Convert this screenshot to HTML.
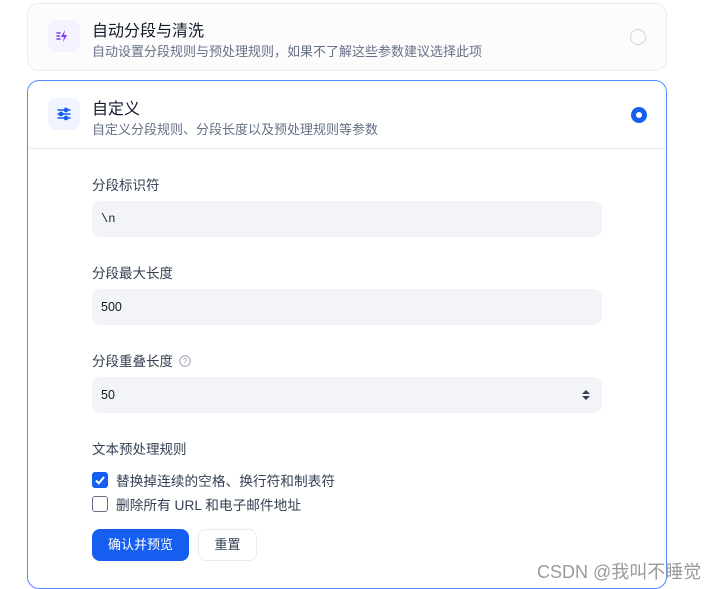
<!DOCTYPE html>
<html><head><meta charset="utf-8"><style>
*{box-sizing:border-box;margin:0;padding:0}
body{width:724px;height:589px;background:#fff;position:relative;overflow:hidden;font-family:"Liberation Sans","Noto Sans CJK SC",sans-serif;color:#101828}
.a{position:absolute}
.card1{left:27px;top:3px;width:640px;height:68px;border:1px solid #eaecf0;border-radius:12px;background:#fcfcfd}
.card2{left:27px;top:80px;width:640px;height:509px;border:1px solid #528bff;border-radius:12px;background:#fff}
.ib{width:32px;height:32px;border-radius:8px;display:flex;align-items:center;justify-content:center}
.t{font-size:16px;color:#101828}
.s{font-size:13px;color:#667085}
.lab{font-size:13.5px;color:#344054;left:92px}
.inp{left:92px;width:510px;height:36px;background:#f2f4f7;border-radius:8px;font-size:12.5px;color:#101828;padding-left:9px;line-height:36px}
.cb{font-size:13.7px;color:#344054;left:92px;display:flex;align-items:center}
.box{width:16px;height:16px;border-radius:3px;margin-right:8px}
</style></head><body>
<div class="a card1"></div>
<div class="a ib" style="left:48px;top:20px;background:#f5f3ff"><svg width="16" height="16" viewBox="0 0 16 16"><path d="M9 2L5 9h3l-1 5 4-7H8z" fill="#7839ee"/><path d="M1 5h3M1 8h2.5M1 11h3" stroke="#7839ee" stroke-width="1.5" stroke-linecap="round"/></svg></div>
<div class="a t" style="left:92px;top:17px">自动分段与清洗</div>
<div class="a s" style="left:92px;top:41px">自动设置分段规则与预处理规则，如果不了解这些参数建议选择此项</div>
<div class="a" style="left:630px;top:29px;width:16px;height:16px;border:1.5px solid #d0d5dd;border-radius:50%"></div>

<div class="a card2"></div>
<div class="a" style="left:28px;top:148px;width:638px;height:1px;background:#eaecf0"></div>
<div class="a ib" style="left:48px;top:98px;background:#eff4ff"><svg width="16" height="16" viewBox="0 0 16 16" stroke="#155eef" stroke-width="1.5" stroke-linecap="round" fill="#155eef"><path d="M2 4h12M2 8h12M2 12h12"/><circle cx="10" cy="4" r="1.6"/><circle cx="5" cy="8" r="1.6"/><circle cx="10" cy="12" r="1.6"/></svg></div>
<div class="a t" style="left:92px;top:95px">自定义</div>
<div class="a s" style="left:92px;top:119px">自定义分段规则、分段长度以及预处理规则等参数</div>
<div class="a" style="left:631px;top:107px;width:16px;height:16px;border:5px solid #155eef;border-radius:50%;background:#fff"></div>

<div class="a lab" style="top:174px">分段标识符</div>
<div class="a inp" style="top:201px;font-family:'Liberation Mono',monospace;font-size:12px">\n</div>
<div class="a lab" style="top:262px">分段最大长度</div>
<div class="a inp" style="top:289px">500</div>
<div class="a lab" style="top:350px">分段重叠长度 <svg width="12" height="12" viewBox="0 0 12 12" style="vertical-align:-1px;margin-left:2px"><circle cx="6" cy="6" r="5.2" fill="none" stroke="#98a2b3" stroke-width="1"/><text x="6" y="9" font-size="8" text-anchor="middle" fill="#98a2b3" font-family="Liberation Sans">?</text></svg></div>
<div class="a inp" style="top:377px">50</div>
<svg class="a" style="left:582px;top:390px" width="8" height="10" viewBox="0 0 8 10"><path d="M4 0L8 4H0zM4 10L0 6h8z" fill="#344054"/></svg>
<div class="a lab" style="top:438px">文本预处理规则</div>
<div class="a cb" style="top:470px"><div class="box" style="background:#155eef;display:flex;align-items:center;justify-content:center"><svg width="12" height="12" viewBox="0 0 12 12"><path d="M2 6.5l2.8 2.8L10 3" stroke="#fff" stroke-width="2" fill="none"/></svg></div>替换掉连续的空格、换行符和制表符</div>
<div class="a cb" style="top:494px"><div class="box" style="border:1.5px solid #667085"></div>删除所有 URL 和电子邮件地址</div>
<div class="a" style="left:92px;top:529px;width:97px;height:32px;background:#155eef;border-radius:8px;color:#fff;font-size:13px;line-height:32px;text-align:center">确认并预览</div>
<div class="a" style="left:198px;top:529px;width:59px;height:32px;border:1px solid #eaecf0;border-radius:8px;color:#344054;font-size:13px;line-height:30px;text-align:center">重置</div>
<div class="a" style="left:537px;top:558px;font-size:18px;color:#9a9a9a">CSDN @我叫不睡觉</div>
</body></html>
